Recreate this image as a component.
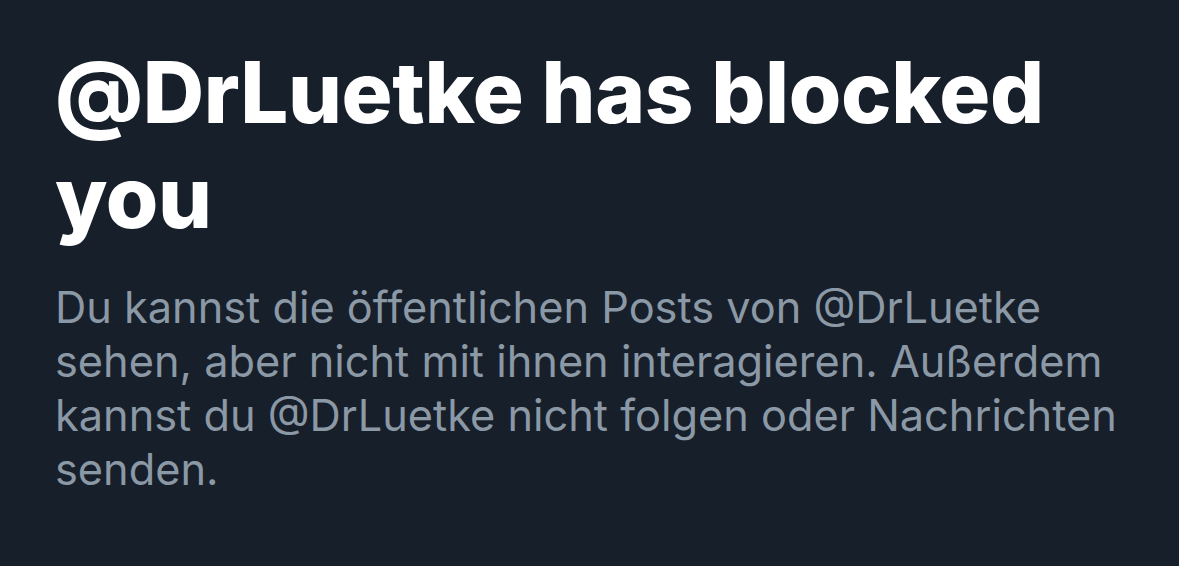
export default function App() {
  return (
    <div className="w-[1179px] h-[566px] bg-[#171f2a] overflow-hidden px-[55px] pt-[40px]" style={{ fontFamily: "Inter, 'Noto Sans', sans-serif" }}>
      <h1 className="text-white font-extrabold text-[85px] leading-[105px] tracking-[-0.4px]">@DrLuetke has blocked you</h1>
      <p className="mt-[30px] text-[#8b98a5] text-[43.3px] leading-[54px] w-[1100px]">
        Du kannst die öffentlichen Posts von @DrLuetke sehen, aber nicht mit ihnen interagieren. Außerdem kannst du @DrLuetke nicht folgen oder Nachrichten senden.
      </p>
    </div>
  );
}
